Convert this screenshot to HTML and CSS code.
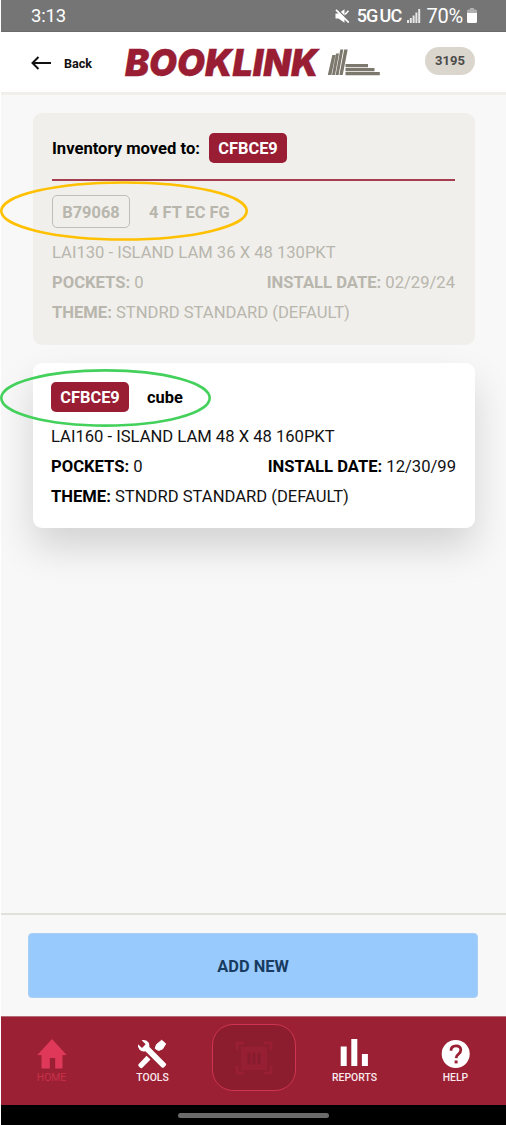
FILE: index.html
```html
<!DOCTYPE html>
<html lang="en">
<head>
<meta charset="utf-8">
<title>Booklink</title>
<link rel="stylesheet" href="styles.css">
</head>
<body>
<div class="app">
  <div class="status">
    <span class="clock">3:13</span>
    <div class="status-right">
      <svg class="mute" width="15" height="14" viewBox="0 0 15 14"><path d="M0.500 4.500h3l6-4.200v13.400l-6-4.200h-3z" fill="#fff"/><path d="M2 0l13 13" stroke="#757575" stroke-width="1.500"/><path d="M1 .8l12.800 12.800" stroke="#fff" stroke-width="1.700"/><path d="M10 5.500l3.500-3.800" stroke="#fff" stroke-width="1.600"/></svg>
      <span class="net">5G<i></i>UC</span>
      <svg class="signal" width="14" height="14" viewBox="0 0 14 14" fill="#e6e6e6"><path d="M0 11h2v3H0zM2.800 9h2v5h-2zM5.600 6.500h2V14h-2zM8.400 3.500h2V14h-2zM11.200 0h2v14h-2z"/></svg>
      <span class="percent">70%</span>
      <svg class="battery" width="10" height="15" viewBox="0 0 10 15"><path d="M3 0h4v1.500h1.500A1.500 1.500 0 0 1 10 3v3H0V3a1.500 1.500 0 0 1 1.500-1.500H3z" fill="#b0b0b0"/><path d="M0 5h10v8.500A1.500 1.500 0 0 1 8.500 15h-7A1.500 1.500 0 0 1 0 13.500z" fill="#fff"/></svg>
    </div>
  </div>

  <header class="header">
    <div class="back">
      <svg width="21" height="14" viewBox="0 0 21 14" fill="none" stroke="#111" stroke-width="2"><path d="M20 7H2M7.500 1L1.500 7l6 6"/></svg>
      <span>Back</span>
    </div>
    <svg class="logo" width="258" height="48" viewBox="0 -8 258 48">
      <text class="wordmark" x="2" y="29.500" textLength="193.500" lengthAdjust="spacingAndGlyphs">BOOKLINK</text>
      <g fill="#7c786d">
        <path d="M209.300 9h3.200l-4.100 20h-3.600zM213 7.500h3l-4 21.500h-3zM217.300 3.500h3L215.600 29h-3zM221.200 3.500h3.500L219.700 29h-3.300z"/>
        <path d="M222.500 18h22.500v3.200h-22.500zM222.500 22h29v3.200h-29zM222.500 26h34.300v3.200h-34.300z"/>
      </g>
    </svg>
    <span class="store">3195</span>
  </header>

  <main class="content">
    <section class="card card-moved">
      <div class="moved-to"><span class="moved-label">Inventory moved to:</span><span class="tag">CFBCE9</span></div>
      <div class="row first"><span class="tag tag-outline">B79068</span><b class="name">4 FT EC FG</b></div>
      <div class="line"><span>LAI130 - ISLAND LAM 36 X 48 130PKT</span></div>
      <div class="line"><span><b>POCKETS:</b> 0</span><span><b>INSTALL DATE:</b> 02/29/24</span></div>
      <div class="line"><span><b>THEME:</b> STNDRD STANDARD (DEFAULT)</span></div>
      <svg class="ring ring-gold" width="248" height="60" viewBox="0 0 248 60"><ellipse cx="124" cy="30" rx="122.700" ry="28.500" fill="none" stroke="#ffc000" stroke-width="2.600"/></svg>
    </section>
    <section class="card card-new">
      <div class="row"><span class="tag">CFBCE9</span><b class="name">cube</b></div>
      <div class="line"><span>LAI160 - ISLAND LAM 48 X 48 160PKT</span></div>
      <div class="line"><span><b>POCKETS:</b> 0</span><span><b>INSTALL DATE:</b> 12/30/99</span></div>
      <div class="line"><span><b>THEME:</b> STNDRD STANDARD (DEFAULT)</span></div>
      <svg class="ring ring-green" width="211" height="58" viewBox="0 0 211 58"><ellipse cx="105.500" cy="29" rx="104.200" ry="27.600" fill="none" stroke="#43d15b" stroke-width="2.600"/></svg>
    </section>
  </main>

  <div class="actions"><button class="add">ADD NEW</button></div>

  <nav class="nav">
    <div class="tab active">
      <svg width="30" height="30" viewBox="0 0 30 30" fill="#e03858"><path d="M15 0l14.700 16H25.500v13.500h-7.300V19h-5.400v10.500H4.500V16H.3z"/></svg>
      <span>HOME</span>
    </div>
    <div class="tab">
      <svg width="30" height="30" viewBox="0 0 30 30" fill="#fff"><path d="M18.200 9.500L19.500 5.500 24.700 1.300 28.700 4.800 25.500 10 21.500 11.500z" stroke="#fff" stroke-linejoin="round"/><path d="M1.500 25.200L9.600 16.700l3.900 3.900-8.400 8.500q-1 .5-1.900-.3l-1.500-1.500q-.8-1-.2-2.100z"/><path d="M4.600 1.300q4.300-.8 6.800 2 1.500 2 1 4.800L28.800 24.500q1 1-.1 2l-1.900 1.900q-1 .9-2 0L8.400 12.200q-3.600.8-5.800-1.400Q.4 8.300 1 5.200l4 3.700 3.700-3.700z"/></svg>
      <span>TOOLS</span>
    </div>
    <div class="scan">
      <svg width="38" height="34" viewBox="0 0 38 34"><path d="M2 9V2h7M29 2h7v7M36 25v7h-7M9 32H2v-7" fill="none" stroke="#981f34" stroke-width="3"/><path d="M6 6h26v23H6z" fill="#971f33"/><path d="M14 13v9M19 13v9M24 13v9" stroke="#861c2d" stroke-width="3.200" stroke-linecap="round"/></svg>
    </div>
    <div class="tab">
      <svg width="30" height="30" viewBox="0 0 30 30" fill="#fff"><path d="M.7 7.500h6V27h-6zM11.300-.5h6V27h-6zM21.900 15h6v12h-6z"/></svg>
      <span>REPORTS</span>
    </div>
    <div class="tab">
      <svg width="30" height="30" viewBox="0 0 30 30"><circle cx="14.700" cy="15" r="14" fill="#fff"/><path d="M10 11.800q0-4.900 5-4.900 4.800 0 4.800 4.200 0 2.200-2.300 4-2.300 1.600-2.400 4" fill="none" stroke="#9b2034" stroke-width="2.800"/><path d="M13.600 21.500h3v2.900h-3z" fill="#9b2034"/></svg>
      <span>HELP</span>
    </div>
  </nav>
  <div class="system"><i></i></div>
</div>
</body>
</html>
```
FILE: styles.css
```css
* { box-sizing: border-box; }
body {
  margin: 0;
  padding-left: 1px;
  background: #fff;
  font-family: Roboto, "Liberation Sans", sans-serif;
  font-size: 16.600px;
  color: #111;
}
svg { display: block; flex: none; }
b { font-weight: 700; }
.app {
  height: 1125px;
  display: flex;
  flex-direction: column;
  background: #f8f8f8;
}
.status {
  height: 32px;
  flex: none;
  display: flex;
  align-items: center;
  justify-content: space-between;
  padding: 0 29px 0 30px;
  background: #757575;
  border-bottom: 1px solid #6b6b6b;
  color: #fff;
}
.clock { font-size: 18.500px; letter-spacing: -.2px; }
.status-right { display: flex; align-items: center; }
.net { margin-left: 7px; font-size: 18px; font-weight: 500; letter-spacing: -.8px; }
.net i { display: inline-block; width: 2px; }
.signal { margin-left: 6px; }
.percent { margin-left: 5px; font-size: 20px; letter-spacing: -.2px; }
.battery { margin-left: 4px; }
.header {
  height: 63px;
  flex: none;
  display: flex;
  align-items: center;
  padding: 0 31px 0 30px;
  background: #fff;
  border-bottom: 3px solid #f0efe9;
}
.back {
  display: flex;
  align-items: center;
  gap: 12px;
  width: 92px;
  padding-top: 2px;
  font-size: 12.600px;
  font-weight: 700;
}
.wordmark {
  font: italic 900 36.500px Inter, sans-serif;
  fill: #991d33;
  stroke: #991d33;
  stroke-width: .3px;
}
.store {
  width: 50px;
  height: 28px;
  margin: 0 0 3px auto;
  border-radius: 14px;
  background: #dad6ce;
  color: #4c4b49;
  font-size: 13px;
  font-weight: 700;
  line-height: 28px;
  text-align: center;
}
.content {
  flex: 1;
  display: flex;
  flex-direction: column;
  gap: 18px;
  padding: 18px 31px 0 32px;
}
.card { position: relative; border-radius: 9px; }
.card-moved {
  height: 232px;
  padding: 20px 20px 0 19px;
  background: #f0efeb;
  color: #b8b6ad;
}
.card-new {
  height: 165px;
  padding: 19px 19px 0 18px;
  background: #fff;
  color: #111;
  box-shadow: 0 20px 38px rgba(0, 0, 0, .15);
}
.card-new b { color: #000; }
.moved-to {
  height: 48px;
  display: flex;
  align-items: flex-start;
  border-bottom: 2px solid #a53c50;
  color: #000;
  font-weight: 700;
}
.moved-label { width: 157px; line-height: 31px; white-space: nowrap; }
.tag {
  width: 78px;
  height: 30px;
  border-radius: 5px;
  background: #991d33;
  color: #fff;
  font-size: 16.400px;
  font-weight: 700;
  line-height: 31px;
  text-align: center;
}
.tag-outline {
  height: 33px;
  border: 1px solid #bfbdb6;
  background: none;
  color: #b8b6ad;
  line-height: 33px;
}
.row { display: flex; align-items: center; gap: 19px; height: 30px; }
.name { font-size: 16.400px; }
.row.first { height: 33px; margin: 14px 0 10px; }
.row.first .name { padding-top: 2px; }
.line {
  height: 30px;
  display: flex;
  justify-content: space-between;
  line-height: 30px;
  white-space: nowrap;
}
.card-new .row { gap: 18px; margin-bottom: 10px; }
.ring { position: absolute; left: -33px; }
.ring-gold { top: 68px; }
.ring-green { top: 6px; }
.actions {
  height: 103px;
  flex: none;
  padding: 18px 28px 0 27px;
  border-top: 2px solid #e2e1d9;
}
.add {
  display: block;
  width: 100%;
  height: 65px;
  padding-top: 3px;
  border: 1px solid #a9cff5;
  border-radius: 4px;
  background: #99cafd;
  color: #173b61;
  font: 700 16.400px Roboto, sans-serif;
}
.nav {
  height: 89px;
  flex: none;
  display: grid;
  grid-template-columns: repeat(5, 101px);
  justify-items: center;
  background: #9b2034;
  border-top: 1px solid #b76b78;
}
.tab {
  display: flex;
  flex-direction: column;
  align-items: center;
  padding-top: 22px;
  color: #f9e9ec;
  font-size: 10.400px;
  font-weight: 500;
  line-height: 17px;
}
.tab.active { color: #c93049; font-weight: 400; }
.scan {
  width: 84px;
  height: 67px;
  margin: 7px 0 0;
  display: flex;
  align-items: center;
  justify-content: center;
  border: 1px solid #cf3450;
  border-radius: 21px;
  background: #8b1d2e;
}
.system {
  height: 20px;
  flex: none;
  display: flex;
  justify-content: center;
  padding-top: 8px;
  background: #000;
}
.system i { width: 151px; height: 5px; border-radius: 3px; background: #6b6b6b; }
```
